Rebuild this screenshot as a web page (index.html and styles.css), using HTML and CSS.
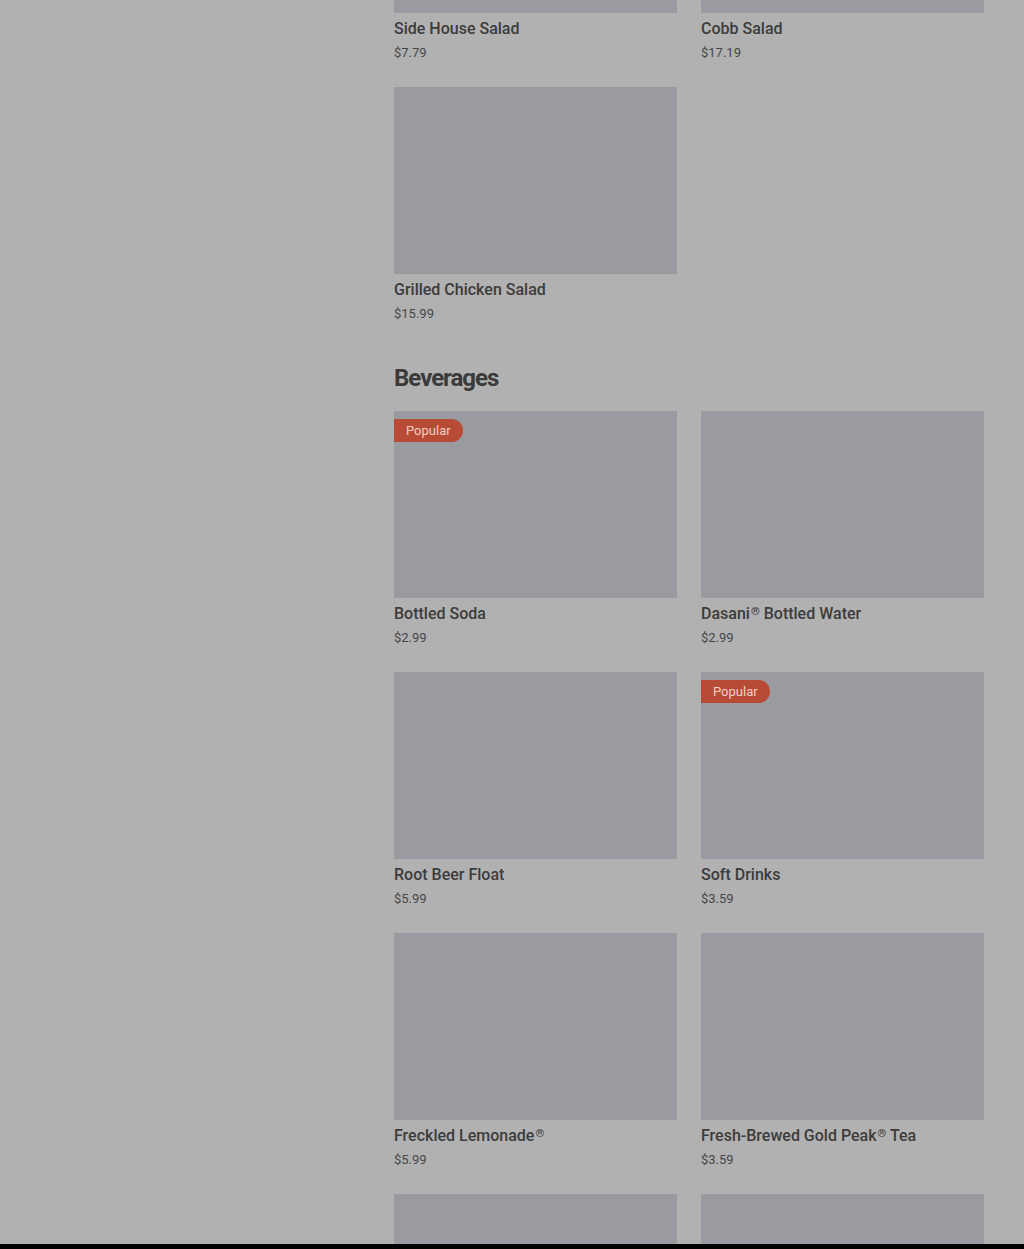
FILE: index.html
```html
<!DOCTYPE html>
<html lang="en">
<head>
<meta charset="utf-8">
<title>Menu</title>
<link rel="stylesheet" href="styles.css">
</head>
<body>
<div class="page">
  <aside class="sidebar"></aside>
  <main class="menu">
    <section class="category category-first">
      <div class="grid">
        <div class="card"><div class="thumb"></div><div class="name">Side House Salad</div><div class="price">$7.79</div></div>
        <div class="card"><div class="thumb"></div><div class="name">Cobb Salad</div><div class="price">$17.19</div></div>
        <div class="card"><div class="thumb"></div><div class="name">Grilled Chicken Salad</div><div class="price">$15.99</div></div>
      </div>
    </section>
    <section class="category">
      <h2 class="cat-title">Beverages</h2>
      <div class="grid">
        <div class="card"><div class="thumb"><span class="badge">Popular</span></div><div class="name">Bottled Soda</div><div class="price">$2.99</div></div>
        <div class="card"><div class="thumb"></div><div class="name">Dasani<span class="reg">®</span> Bottled Water</div><div class="price">$2.99</div></div>
        <div class="card"><div class="thumb"></div><div class="name">Root Beer Float</div><div class="price">$5.99</div></div>
        <div class="card"><div class="thumb"><span class="badge">Popular</span></div><div class="name">Soft Drinks</div><div class="price">$3.59</div></div>
        <div class="card"><div class="thumb"></div><div class="name">Freckled Lemonade<span class="reg">®</span></div><div class="price">$5.99</div></div>
        <div class="card"><div class="thumb"></div><div class="name">Fresh-Brewed Gold Peak<span class="reg">®</span> Tea</div><div class="price">$3.59</div></div>
        <div class="card"><div class="thumb"></div></div>
        <div class="card"><div class="thumb"></div></div>
      </div>
    </section>
  </main>
</div>
<div class="bottom-bar"></div>
</body>
</html>
```
FILE: styles.css
```css
html, body {
  margin: 0;
  padding: 0;
  background: #b1b1b1;
  overflow: hidden;
}
body {
  font-family: Roboto, "Liberation Sans", Arial, sans-serif;
  color: #383838;
}
.page {
  display: grid;
  grid-template-columns: 394px 590px;
}
.menu {
  margin-top: -174px;
}
.category + .category {
  margin-top: 39px;
}
.cat-title {
  margin: 0 0 18px;
  font-size: 24px;
  line-height: 30px;
  font-weight: 700;
  letter-spacing: -1px;
  color: #3a3a3a;
}
.grid {
  display: grid;
  grid-template-columns: 283px 283px;
  column-gap: 24px;
  row-gap: 24px;
}
.thumb {
  position: relative;
  height: 187px;
  background: #999ba1;
}
.name {
  margin-top: 6px;
  font-size: 16px;
  line-height: 20px;
  font-weight: 500;
  color: #3c3c3c;
}
.reg {
  font-size: 0.7em;
  vertical-align: 0.35em;
  line-height: 0;
  margin-left: 1px;
}
.price {
  margin-top: 4px;
  font-size: 13px;
  line-height: 20px;
  color: #474747;
}
.badge {
  position: absolute;
  top: 8px;
  left: 0;
  height: 23px;
  line-height: 23px;
  padding: 0 12px;
  font-size: 13px;
  color: #efcfc5;
  background: #b84b36;
  border-radius: 0 12px 12px 0;
}
.bottom-bar {
  position: fixed;
  left: 0;
  right: 0;
  bottom: 0;
  height: 5px;
  background: #000;
}
```
